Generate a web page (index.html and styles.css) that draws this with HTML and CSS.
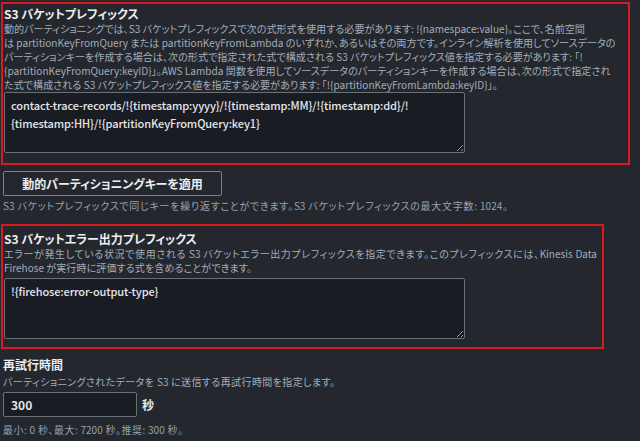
FILE: index.html
```html
<!DOCTYPE html>
<html lang="ja">
<head>
<meta charset="utf-8">
<link rel="stylesheet" href="styles.css">
</head>
<body>
<div class="page">
  <section class="hl hl-wide">
    <div class="label">S3 バケットプレフィックス</div>
    <div class="desc desc-main">
      <span class="row">動的パーティショニングでは、S3 バケットプレフィックスで次の式形式を使用する必要があります: !{namespace:value}。ここで、名前空間</span>
      <span class="row">は partitionKeyFromQuery または partitionKeyFromLambda のいずれか、あるいはその両方です。インライン解析を使用してソースデータの</span>
      <span class="row">パーティションキーを作成する場合は、次の形式で指定された式で構成される S3 バケットプレフィックス値を指定する必要があります: 「!</span>
      <span class="row">{partitionKeyFromQuery:keyID}」。AWS Lambda 関数を使用してソースデータのパーティションキーを作成する場合は、次の形式で指定され</span>
      <span class="row">た式で構成される S3 バケットプレフィックス値を指定する必要があります: 「!{partitionKeyFromLambda:keyID}」。</span>
    </div>
    <textarea class="ta ta-first" spellcheck="false">contact-trace-records/!{timestamp:yyyy}/!{timestamp:MM}/!{timestamp:dd}/!
{timestamp:HH}/!{partitionKeyFromQuery:key1}</textarea>
  </section>

  <button class="btn" type="button">動的パーティショニングキーを適用</button>
  <div class="hint hint-btn ln w-hint">S3 バケットプレフィックスで同じキーを繰り返すことができます。S3 バケットプレフィックスの最大文字数: 1024。</div>

  <section class="hl hl-narrow">
    <div class="label">S3 バケットエラー出力プレフィックス</div>
    <div class="desc">
      <span class="ln w-err">エラーが発生している状況で使用される S3 バケットエラー出力プレフィックスを指定できます。このプレフィックスには、Kinesis Data</span>
      <span class="ln w-err-end">Firehose が実行時に評価する式を含めることができます。</span>
    </div>
    <textarea class="ta ta-second" spellcheck="false">!{firehose:error-output-type}</textarea>
  </section>

  <div class="field">
    <div class="label">再試行時間</div>
    <div class="desc ln w-retry">パーティショニングされたデータを S3 に送信する再試行時間を指定します。</div>
    <div class="inrow">
      <input class="num" type="text" value="300">
      <span class="unit">秒</span>
    </div>
    <div class="hint hint-num ln w-range">最小: 0 秒、最大: 7200 秒。推奨: 300 秒。</div>
  </div>
</div>
</body>
</html>
```

FILE: styles.css
```css
html, body {
  margin: 0;
  padding: 0;
  background: #24272d;
}
body {
  font-family: "Noto Sans CJK JP", "Noto Sans", sans-serif;
  color: #e9ebed;
  width: 640px;
  height: 441px;
  overflow: hidden;
}
.page {
  padding: 2px 0 0 1px;
}
.hl {
  border: 2px solid #d91a1a;
  box-sizing: border-box;
  padding: 2px 0 0 1px;
}
.hl-wide {
  width: 629px;
  height: 163px;
}
.hl-narrow {
  width: 603px;
  height: 125px;
  margin-top: 11px;
  padding-top: 5px;
}
.label {
  font-size: 12px;
  line-height: 16px;
  font-weight: 700;
  color: #eceef0;
  white-space: nowrap;
  font-feature-settings: "palt";
}
.desc {
  font-size: 10px;
  line-height: 14px;
  color: #a2adba;
  white-space: nowrap;
  font-feature-settings: "palt";
}
.desc-main {
  font-size: 10.1px;
}
.row {
  display: block;
  white-space: nowrap;
}
.ln {
  display: block;
  text-align: justify;
  text-align-last: justify;
  white-space: nowrap;
}
.w-hint { width: 505px; }
.w-err { width: 593px; }
.w-err-end { width: 248px; }
.w-retry { width: 332px; }
.w-range { width: 180px; }
.ta {
  display: block;
  box-sizing: border-box;
  width: 461px;
  height: 61px;
  margin: 0;
  background: #191c22;
  border: 1px solid #687078;
  border-radius: 2px;
  color: #e3e6ea;
  font-family: "Noto Sans CJK JP", "Noto Sans", sans-serif;
  font-size: 11px;
  letter-spacing: -0.1px;
  font-weight: 500;
  line-height: 18px;
  padding: 3px 6px;
  white-space: pre;
  overflow: hidden;
  resize: vertical;
  outline: none;
}
.ta-second {
  margin-top: 3px;
  padding-top: 3px;
}
.btn {
  display: block;
  margin: 6px 0 0 2px;
  width: 219px;
  height: 25px;
  box-sizing: border-box;
  background: #24272d;
  border: 1px solid #7a838d;
  border-radius: 2px;
  color: #eceef0;
  font-family: "Noto Sans CJK JP", "Noto Sans", sans-serif;
  font-size: 12px;
  font-weight: 700;
  padding: 0;
  font-feature-settings: "palt";
}
.hint {
  font-size: 10px;
  line-height: 14px;
  color: #97a2af;
  white-space: nowrap;
  font-feature-settings: "palt";
}
.hint-btn {
  margin: 3px 0 0 2px;
}
.field {
  margin: 8px 0 0 2px;
}
.field .desc {
  margin-top: 2px;
}
.inrow {
  display: flex;
  align-items: center;
  gap: 5px;
  margin-top: 3px;
}
.num {
  box-sizing: border-box;
  width: 134px;
  height: 25px;
  margin: 0;
  background: #191c22;
  border: 1px solid #687078;
  border-radius: 2px;
  color: #e3e6ea;
  font-family: "Noto Sans CJK JP", "Noto Sans", sans-serif;
  font-size: 12px;
  font-weight: 600;
  padding: 0 7px;
  outline: none;
}
.unit {
  font-size: 12px;
  font-weight: 600;
  color: #e3e6ea;
}
.hint-num {
  margin-top: 6px;
}
```
